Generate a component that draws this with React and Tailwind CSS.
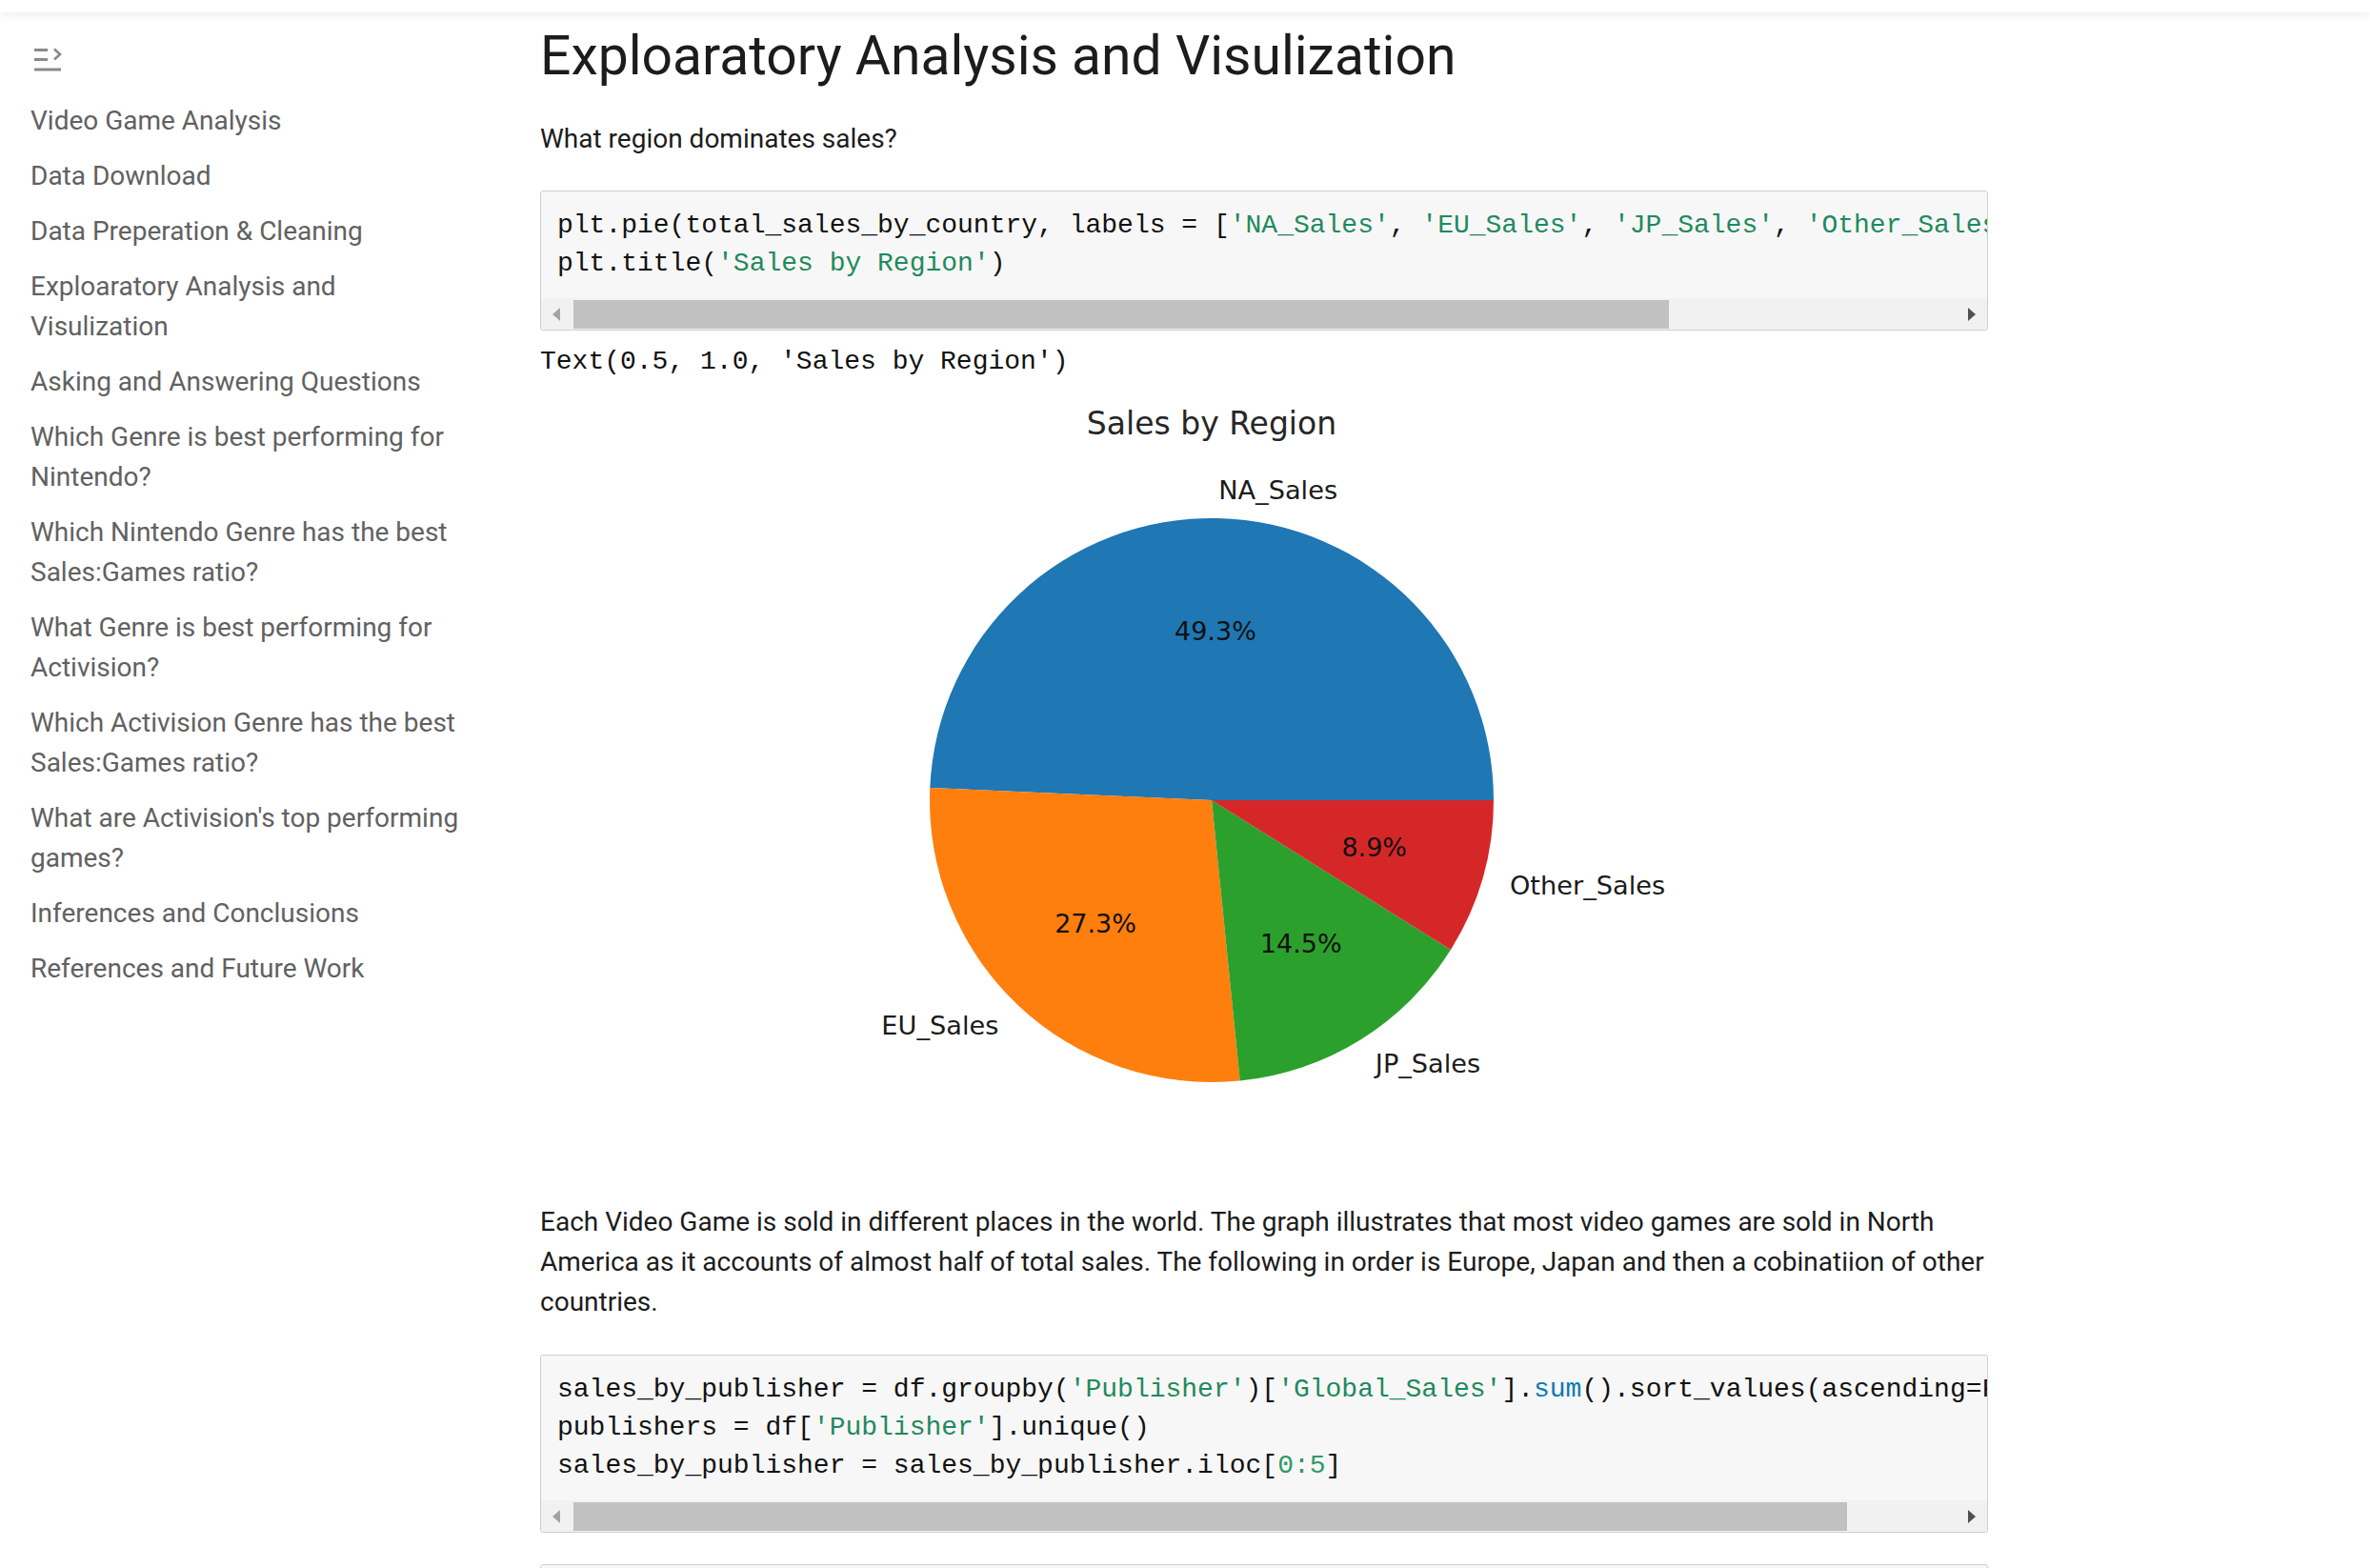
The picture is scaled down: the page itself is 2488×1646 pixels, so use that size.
import React from 'react';

const navItems = [
  'Video Game Analysis',
  'Data Download',
  'Data Preperation & Cleaning',
  'Exploaratory Analysis and Visulization',
  'Asking and Answering Questions',
  'Which Genre is best performing for Nintendo?',
  'Which Nintendo Genre has the best Sales:Games ratio?',
  'What Genre is best performing for Activision?',
  'Which Activision Genre has the best Sales:Games ratio?',
  "What are Activision's top performing games?",
  'Inferences and Conclusions',
  'References and Future Work',
];

const slices = [
  { label: 'NA_Sales', pct: 49.3, color: '#1f77b4' },
  { label: 'EU_Sales', pct: 27.3, color: '#ff7f0e' },
  { label: 'JP_Sales', pct: 14.5, color: '#2ca02c' },
  { label: 'Other_Sales', pct: 8.9, color: '#d62728' },
];

function Str({ children }) {
  return <span className="text-[#1f8a5b]">{children}</span>;
}

function Num({ children }) {
  return <span className="text-[#2f9a66]">{children}</span>;
}

function Fn({ children }) {
  return <span className="text-[#0b7ab3]">{children}</span>;
}

function CodeCell({ children, thumbWidth }) {
  return (
    <div className="border border-[#cfcfcf] rounded-[3px] bg-[#f7f7f7] overflow-hidden">
      <pre className="px-[17px] py-4 whitespace-pre overflow-hidden text-[28px] leading-[40px] text-[#111] font-['Liberation_Mono',monospace]">
        {children}
      </pre>
      <div className="h-[33px] bg-[#f1f1f1] flex items-center">
        <div className="w-[34px] flex justify-center pr-[3px]">
          <div className="w-0 h-0 border-y-[7px] border-y-transparent border-r-[8px] border-r-[#a3a3a3]" />
        </div>
        <div className="h-[30px] bg-[#c1c1c1]" style={{ width: thumbWidth }} />
        <div className="flex-1" />
        <div className="w-[34px] flex justify-center pl-[2px]">
          <div className="w-0 h-0 border-y-[7px] border-y-transparent border-l-[8px] border-l-[#505050]" />
        </div>
      </div>
    </div>
  );
}

function PieChart() {
  const cx = 705;
  const cy = 440;
  const r = 296;
  const rad = (d) => (d * Math.PI) / 180;
  const pt = (d, rr) => [cx + rr * Math.cos(rad(d)), cy - rr * Math.sin(rad(d))];
  let start = 0;
  const wedges = slices.map((s) => {
    const t1 = start;
    const t2 = start + (s.pct / 100) * 360;
    start = t2;
    const [x1, y1] = pt(t1, r);
    const [x2, y2] = pt(t2, r);
    const large = t2 - t1 > 180 ? 1 : 0;
    const mid = (t1 + t2) / 2;
    return {
      ...s,
      d: `M ${cx} ${cy} L ${x1} ${y1} A ${r} ${r} 0 ${large} 0 ${x2} ${y2} Z`,
      mid,
      lab: pt(mid, r * 1.1),
      pc: pt(mid, r * 0.6),
    };
  });

  return (
    <svg width="1520" height="830" viewBox="0 0 1520 830" className="block">
      <text
        x={cx}
        y={44}
        textAnchor="middle"
        dominantBaseline="central"
        fontFamily="DejaVu Sans, sans-serif"
        fontSize="33"
        fill="#262626"
      >
        Sales by Region
      </text>
      {wedges.map((w) => (
        <path key={w.label} d={w.d} fill={w.color} />
      ))}
      {wedges.map((w) => (
        <text
          key={w.label + 'l'}
          x={w.lab[0]}
          y={w.lab[1]}
          textAnchor={Math.cos(rad(w.mid)) >= 0 ? 'start' : 'end'}
          dominantBaseline="central"
          fontFamily="DejaVu Sans, sans-serif"
          fontSize="27.2"
          fill="#1a1a1a"
        >
          {w.label}
        </text>
      ))}
      {wedges.map((w) => (
        <text
          key={w.label + 'p'}
          x={w.pc[0]}
          y={w.pc[1]}
          textAnchor="middle"
          dominantBaseline="central"
          fontFamily="DejaVu Sans, sans-serif"
          fontSize="27"
          fill="#111"
        >
          {w.pct}%
        </text>
      ))}
    </svg>
  );
}

export default function App() {
  return (
    <div className="h-[1646px] overflow-hidden bg-white font-['Roboto',sans-serif]">
      <div className="h-[13px] bg-white relative z-10 shadow-[0_3px_10px_rgba(0,0,0,0.07)]" />
      <div className="flex">
        <aside className="w-[567px] shrink-0 pl-[32px] pr-[73px]">
          <div className="mt-[37px] ml-[4px]">
            <svg width="30" height="26" viewBox="0 0 30 26" fill="none" stroke="#8a8a8a" strokeWidth="3">
              <line x1="0" y1="2.5" x2="14" y2="2.5" />
              <line x1="0" y1="12.5" x2="14" y2="12.5" />
              <line x1="0" y1="23" x2="28" y2="23" />
              <polyline points="21,1.5 27,7 21,12.5" strokeWidth="2.6" />
            </svg>
          </div>
          <nav className="mt-[30px] flex flex-col gap-[16px]">
            {navItems.map((item) => (
              <a key={item} className="text-[28px] leading-[42px] text-[#616161]">
                {item}
              </a>
            ))}
          </nav>
        </aside>
        <main className="w-[1520px] shrink-0">
          <h1 className="mt-[12px] text-[57px] leading-[68px] text-[#1c1c1c] font-normal">
            Exploaratory Analysis and Visulization
          </h1>
          <p className="mt-[32px] text-[28px] leading-[42px] text-[#1c1c1c]">What region dominates sales?</p>
          <div className="mt-[33px]">
            <CodeCell thumbWidth={1150}>
              {'plt.pie(total_sales_by_country, labels = ['}
              <Str>'NA_Sales'</Str>
              {', '}
              <Str>'EU_Sales'</Str>
              {', '}
              <Str>'JP_Sales'</Str>
              {', '}
              <Str>'Other_Sales'</Str>
              {'], autopct='}
              <Str>'%1.1f%%'</Str>
              {')\nplt.title('}
              <Str>'Sales by Region'</Str>
              {')'}
            </CodeCell>
          </div>
          <div className="mt-[13px] text-[28px] leading-[40px] text-[#111] whitespace-pre font-['Liberation_Mono',monospace]">
            Text(0.5, 1.0, 'Sales by Region')
          </div>
          <PieChart />
          <p className="mt-[32px] text-[28px] leading-[42px] text-[#1c1c1c]">
            Each Video Game is sold in different places in the world. The graph illustrates that most video games are
            sold in North America as it accounts of almost half of total sales. The following in order is Europe, Japan
            and then a cobinatiion of other countries.
          </p>
          <div className="mt-[34px]">
            <CodeCell thumbWidth={1337}>
              {'sales_by_publisher = df.groupby('}
              <Str>'Publisher'</Str>
              {')['}
              <Str>'Global_Sales'</Str>
              {'].'}
              <Fn>sum</Fn>
              {'().sort_values(ascending=False)\npublishers = df['}
              <Str>'Publisher'</Str>
              {'].unique()\nsales_by_publisher = sales_by_publisher.iloc['}
              <Num>0</Num>
              <Num>:5</Num>
              {']'}
            </CodeCell>
          </div>
          <div className="mt-[33px]">
            <CodeCell thumbWidth={1200}>
              {'plt.figure(figsize=('}
              <Num>12</Num>
              {','}
              <Num>6</Num>
              {'))'}
            </CodeCell>
          </div>
        </main>
      </div>
    </div>
  );
}
